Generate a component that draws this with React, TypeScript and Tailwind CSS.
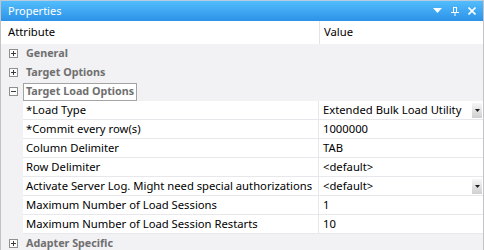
type Child = { name: string; value: string; dropdown?: boolean };

const children: Child[] = [
  { name: "*Load Type", value: "Extended Bulk Load Utility", dropdown: true },
  { name: "*Commit every row(s)", value: "1000000" },
  { name: "Column Delimiter", value: "TAB" },
  { name: "Row Delimiter", value: "<default>" },
  { name: "Activate Server Log. Might need special authorizations", value: "<default>", dropdown: true },
  { name: "Maximum Number of Load Sessions", value: "1" },
  { name: "Maximum Number of Load Session Restarts", value: "10" },
];

function ExpandBox({ open }: { open?: boolean }) {
  return (
    <svg width="9" height="9" viewBox="0 0 9 9" className="shrink-0">
      <rect x="0.5" y="0.5" width="8" height="8" fill="#fbfbfb" stroke="#8e8f8f" />
      <path d="M2 4.5h5" stroke="#3c3c3c" />
      {!open && <path d="M4.5 2v5" stroke="#3c3c3c" />}
    </svg>
  );
}

function Category({ label, open, focused }: { label: string; open?: boolean; focused?: boolean }) {
  return (
    <div className="flex h-[19px] items-center">
      <div className="flex w-[22px] shrink-0 items-center pl-[8px]">
        <ExpandBox open={open} />
      </div>
      <div
        className={`flex h-[18px] items-center px-[2px] text-[10.75px] font-bold text-[#6f6f6f] ${
          focused ? "border border-[#a3a3a3] bg-white" : "border border-transparent"
        }`}
      >
        {label}
      </div>
    </div>
  );
}

function DropButton() {
  return (
    <div className="mr-[1px] flex h-[15px] w-[10px] shrink-0 items-center justify-center bg-gradient-to-b from-[#f7f7f7] to-[#cfcfcf]">
      <svg width="5" height="3" viewBox="0 0 5 3">
        <path d="M0 0h5L2.5 3z" fill="#1e1e1e" />
      </svg>
    </div>
  );
}

export default function App() {
  return (
    <div
      className="h-[250px] w-[484px] overflow-hidden border-x border-[#c3c3c6] bg-[#f2f1f4] text-black"
      style={{ fontFamily: '"Noto Sans", "Open Sans", sans-serif' }}
    >
      {/* title bar */}
      <div className="flex h-[21px] items-center border-t border-[#b9cbe0] bg-gradient-to-b from-[#52bdfc] to-[#2c92e8] pl-[7px] pr-[7px]">
        <span className="text-[11px] text-white">Properties</span>
        <div className="ml-auto flex items-center gap-[9px]">
          <svg width="9" height="6" viewBox="0 0 9 6">
            <path d="M0 0h9L4.5 5z" fill="#fff" />
          </svg>
          <svg width="8" height="9" viewBox="0 0 8 9">
            <path d="M2 0.5h4M2.5 0.5v5M5.5 0.5v5M0 5.5h8M4 5.5v3.5" stroke="#fff" fill="none" />
          </svg>
          <svg width="8" height="8" viewBox="0 0 8 8">
            <path d="M0.5 0.5l7 7M7.5 0.5l-7 7" stroke="#fff" strokeWidth="1.6" />
          </svg>
        </div>
      </div>

      {/* header */}
      <div className="flex h-[23px] bg-white text-[11.25px]">
        <div className="flex w-[319px] items-center border-r border-[#e4e4e6] pl-[7px]">Attribute</div>
        <div className="flex items-center pl-[4px]">Value</div>
      </div>

      <Category label="General" />
      <Category label="Target Options" />
      <Category label="Target Load Options" open focused />

      {children.map((c) => (
        <div key={c.name} className="ml-[22px] flex h-[19px] border-b border-[#e8e7ec] text-[11.25px]">
          <div className="flex w-[296px] shrink-0 items-center overflow-hidden whitespace-nowrap border-r border-[#e8e7ec] bg-white pl-[3px]">
            {c.name}
          </div>
          <div className="flex flex-1 items-center bg-white pl-[4px]">
            <span className="flex-1 whitespace-nowrap">{c.value}</span>
            {c.dropdown && <DropButton />}
          </div>
        </div>
      ))}

      <Category label="Adapter Specific" />
    </div>
  );
}
